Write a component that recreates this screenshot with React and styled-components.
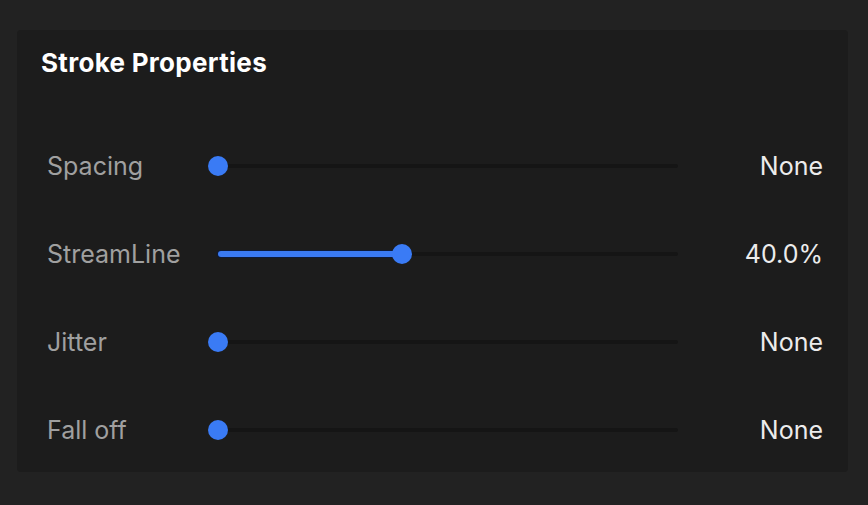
import React from "react";
import styled, { createGlobalStyle } from "styled-components";

const Global = createGlobalStyle`
  html, body { margin: 0; padding: 0; background: #222222; }
  body { font-family: Inter, "Noto Sans", sans-serif; -webkit-font-smoothing: antialiased; }
`;

const Page = styled.div`
  width: 868px;
  height: 505px;
  background: #222222;
  padding: 30px 20px 0 17px;
  box-sizing: border-box;
`;

const Panel = styled.section`
  width: 831px;
  height: 442px;
  background: #1c1c1c;
  border-radius: 4px;
  box-sizing: border-box;
  padding-top: 17px;
  display: flex;
  flex-direction: column;
`;

const Title = styled.h2`
  margin: 0 0 45px 24px;
  font-size: 26px;
  line-height: 32px;
  font-weight: 700;
  letter-spacing: 0.3px;
  color: #ffffff;
`;

const Rows = styled.div`
  display: flex;
  flex-direction: column;
  gap: 4px;
`;

const Row = styled.div`
  height: 84px;
  display: grid;
  grid-template-columns: 161px 480px 1fr;
  align-items: center;
  padding: 0 25px 0 30px;
`;

const Label = styled.span`
  font-size: 25px;
  color: #a0a0a0;
`;

const Value = styled.span`
  font-size: 25px;
  color: #ececec;
  text-align: right;
`;

const SliderBox = styled.div`
  position: relative;
  height: 24px;
  margin: 0 10px;
`;

const Track = styled.div`
  position: absolute;
  left: 0;
  right: 0;
  top: 10px;
  height: 4px;
  border-radius: 2px;
  background: #151515;
`;

const Fill = styled.div`
  position: absolute;
  left: 0;
  top: 9px;
  height: 6px;
  border-radius: 3px;
  background: #3a7af2;
  box-shadow: 0 0 0 1px #0d1a38;
`;

const Thumb = styled.div`
  position: absolute;
  top: 2px;
  width: 20px;
  height: 20px;
  margin-left: -10px;
  border-radius: 50%;
  background: #3a7bf5;
`;

const Slider = ({ value }) => (
  <SliderBox>
    <Track />
    {value > 0 && <Fill style={{ width: `${value * 100}%` }} />}
    <Thumb style={{ left: `${value * 100}%` }} />
  </SliderBox>
);

const data = [
  { label: "Spacing", value: 0, text: "None" },
  { label: "StreamLine", value: 0.4, text: "40.0%" },
  { label: "Jitter", value: 0, text: "None" },
  { label: "Fall off", value: 0, text: "None" },
];

export default function App() {
  return (
    <Page>
      <Global />
      <Panel>
        <Title>Stroke Properties</Title>
        <Rows>
          {data.map((d) => (
            <Row key={d.label}>
              <Label>{d.label}</Label>
              <Slider value={d.value} />
              <Value>{d.text}</Value>
            </Row>
          ))}
        </Rows>
      </Panel>
    </Page>
  );
}
